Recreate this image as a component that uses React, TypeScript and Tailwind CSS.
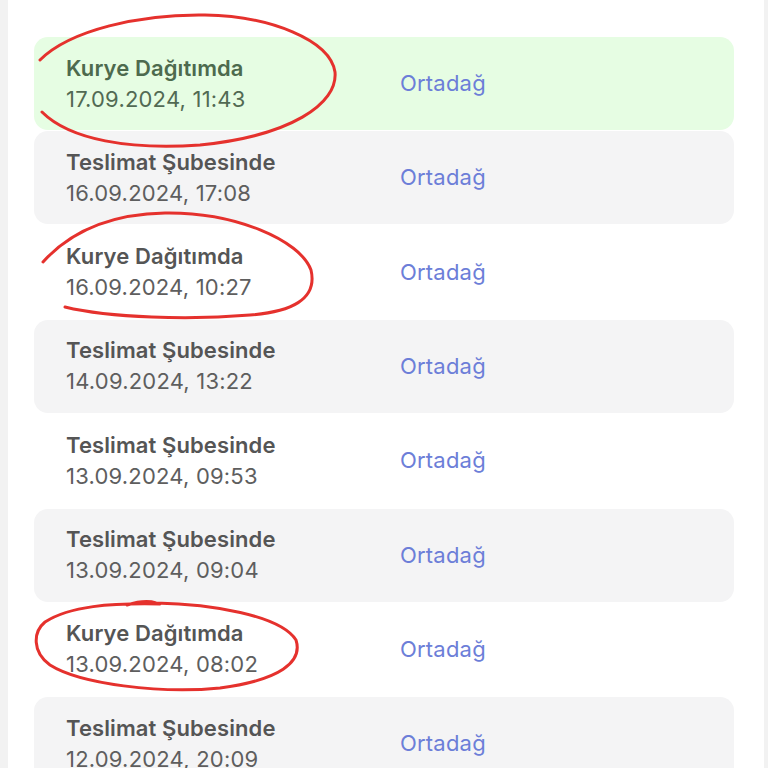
import React from "react"

type Row = { title: string; date: string; tone: "green" | "gray" | "white" }

const rows: Row[] = [
    { title: "Kurye Dağıtımda", date: "17.09.2024, 11:43", tone: "green" },
    { title: "Teslimat Şubesinde", date: "16.09.2024, 17:08", tone: "gray" },
    { title: "Kurye Dağıtımda", date: "16.09.2024, 10:27", tone: "white" },
    { title: "Teslimat Şubesinde", date: "14.09.2024, 13:22", tone: "gray" },
    { title: "Teslimat Şubesinde", date: "13.09.2024, 09:53", tone: "white" },
    { title: "Teslimat Şubesinde", date: "13.09.2024, 09:04", tone: "gray" },
    { title: "Kurye Dağıtımda", date: "13.09.2024, 08:02", tone: "white" },
    { title: "Teslimat Şubesinde", date: "12.09.2024, 20:09", tone: "gray" },
]

function HistoryRow({ row }: { row: Row }) {
    const bg = row.tone === "green" ? "bg-[#e6fde3]" : row.tone === "gray" ? "bg-[#f4f4f5]" : "bg-white"
    const titleColor = row.tone === "green" ? "text-[#4d6a4e]" : "text-[#555555]"
    const dateColor = row.tone === "green" ? "text-[#526a53]" : "text-[#5e5e5e]"
    return (
        <li className={`${bg} h-[93px] shrink-0 rounded-[14px] flex items-center pl-[32px]`}>
            <div className="w-[334px] flex flex-col">
                <span className={`${titleColor} text-[22px] leading-[31px] font-semibold tracking-[0.1px]`}>{row.title}</span>
                <span className={`${dateColor} text-[22px] leading-[31px] tracking-[0.2px]`}>{row.date}</span>
            </div>
            <span className="text-[#6c7ed8] text-[22px] leading-[31px] tracking-[0.2px]">Ortadağ</span>
        </li>
    )
}

export default function App() {
    return (
        <main className="relative w-[768px] h-[768px] overflow-hidden bg-[#f2f2f2] pl-[8px] pr-[4px] font-['Inter',sans-serif]">
            <div className="h-full bg-white pl-[26px] pr-[30px] pt-[37px]">
                <ul className="flex flex-col gap-[1.33px]">
                    {rows.map((r, i) => <HistoryRow row={r} key={i} />)}
                </ul>
            </div>

            {/* hand drawn red marks */}
            <svg className="absolute inset-0 pointer-events-none" width="768" height="768" viewBox="0 0 768 768" fill="none">
                <g stroke="#e5312d" strokeWidth="3" strokeLinecap="round" strokeLinejoin="round">
                    <path d="M40 60 C 70 30, 140 14, 205 15 C 270 16, 330 40, 335 72 C 338 104, 290 136, 200 145 C 130 150, 70 140, 42 112" />
                    <path d="M43 262 C 70 232, 110 214, 165 213 C 235 212, 300 240, 311 270 C 318 300, 290 312, 250 315 C 190 320, 110 318, 65 307" />
                    <path d="M127 605 C 140 601, 150 601, 156 603 C 210 604, 280 615, 296 640 C 303 662, 280 680, 220 688 C 160 694, 80 684, 50 665 C 32 652, 33 632, 45 622 C 70 606, 110 603, 160 604" />
                </g>
            </svg>
        </main>
    )
}
